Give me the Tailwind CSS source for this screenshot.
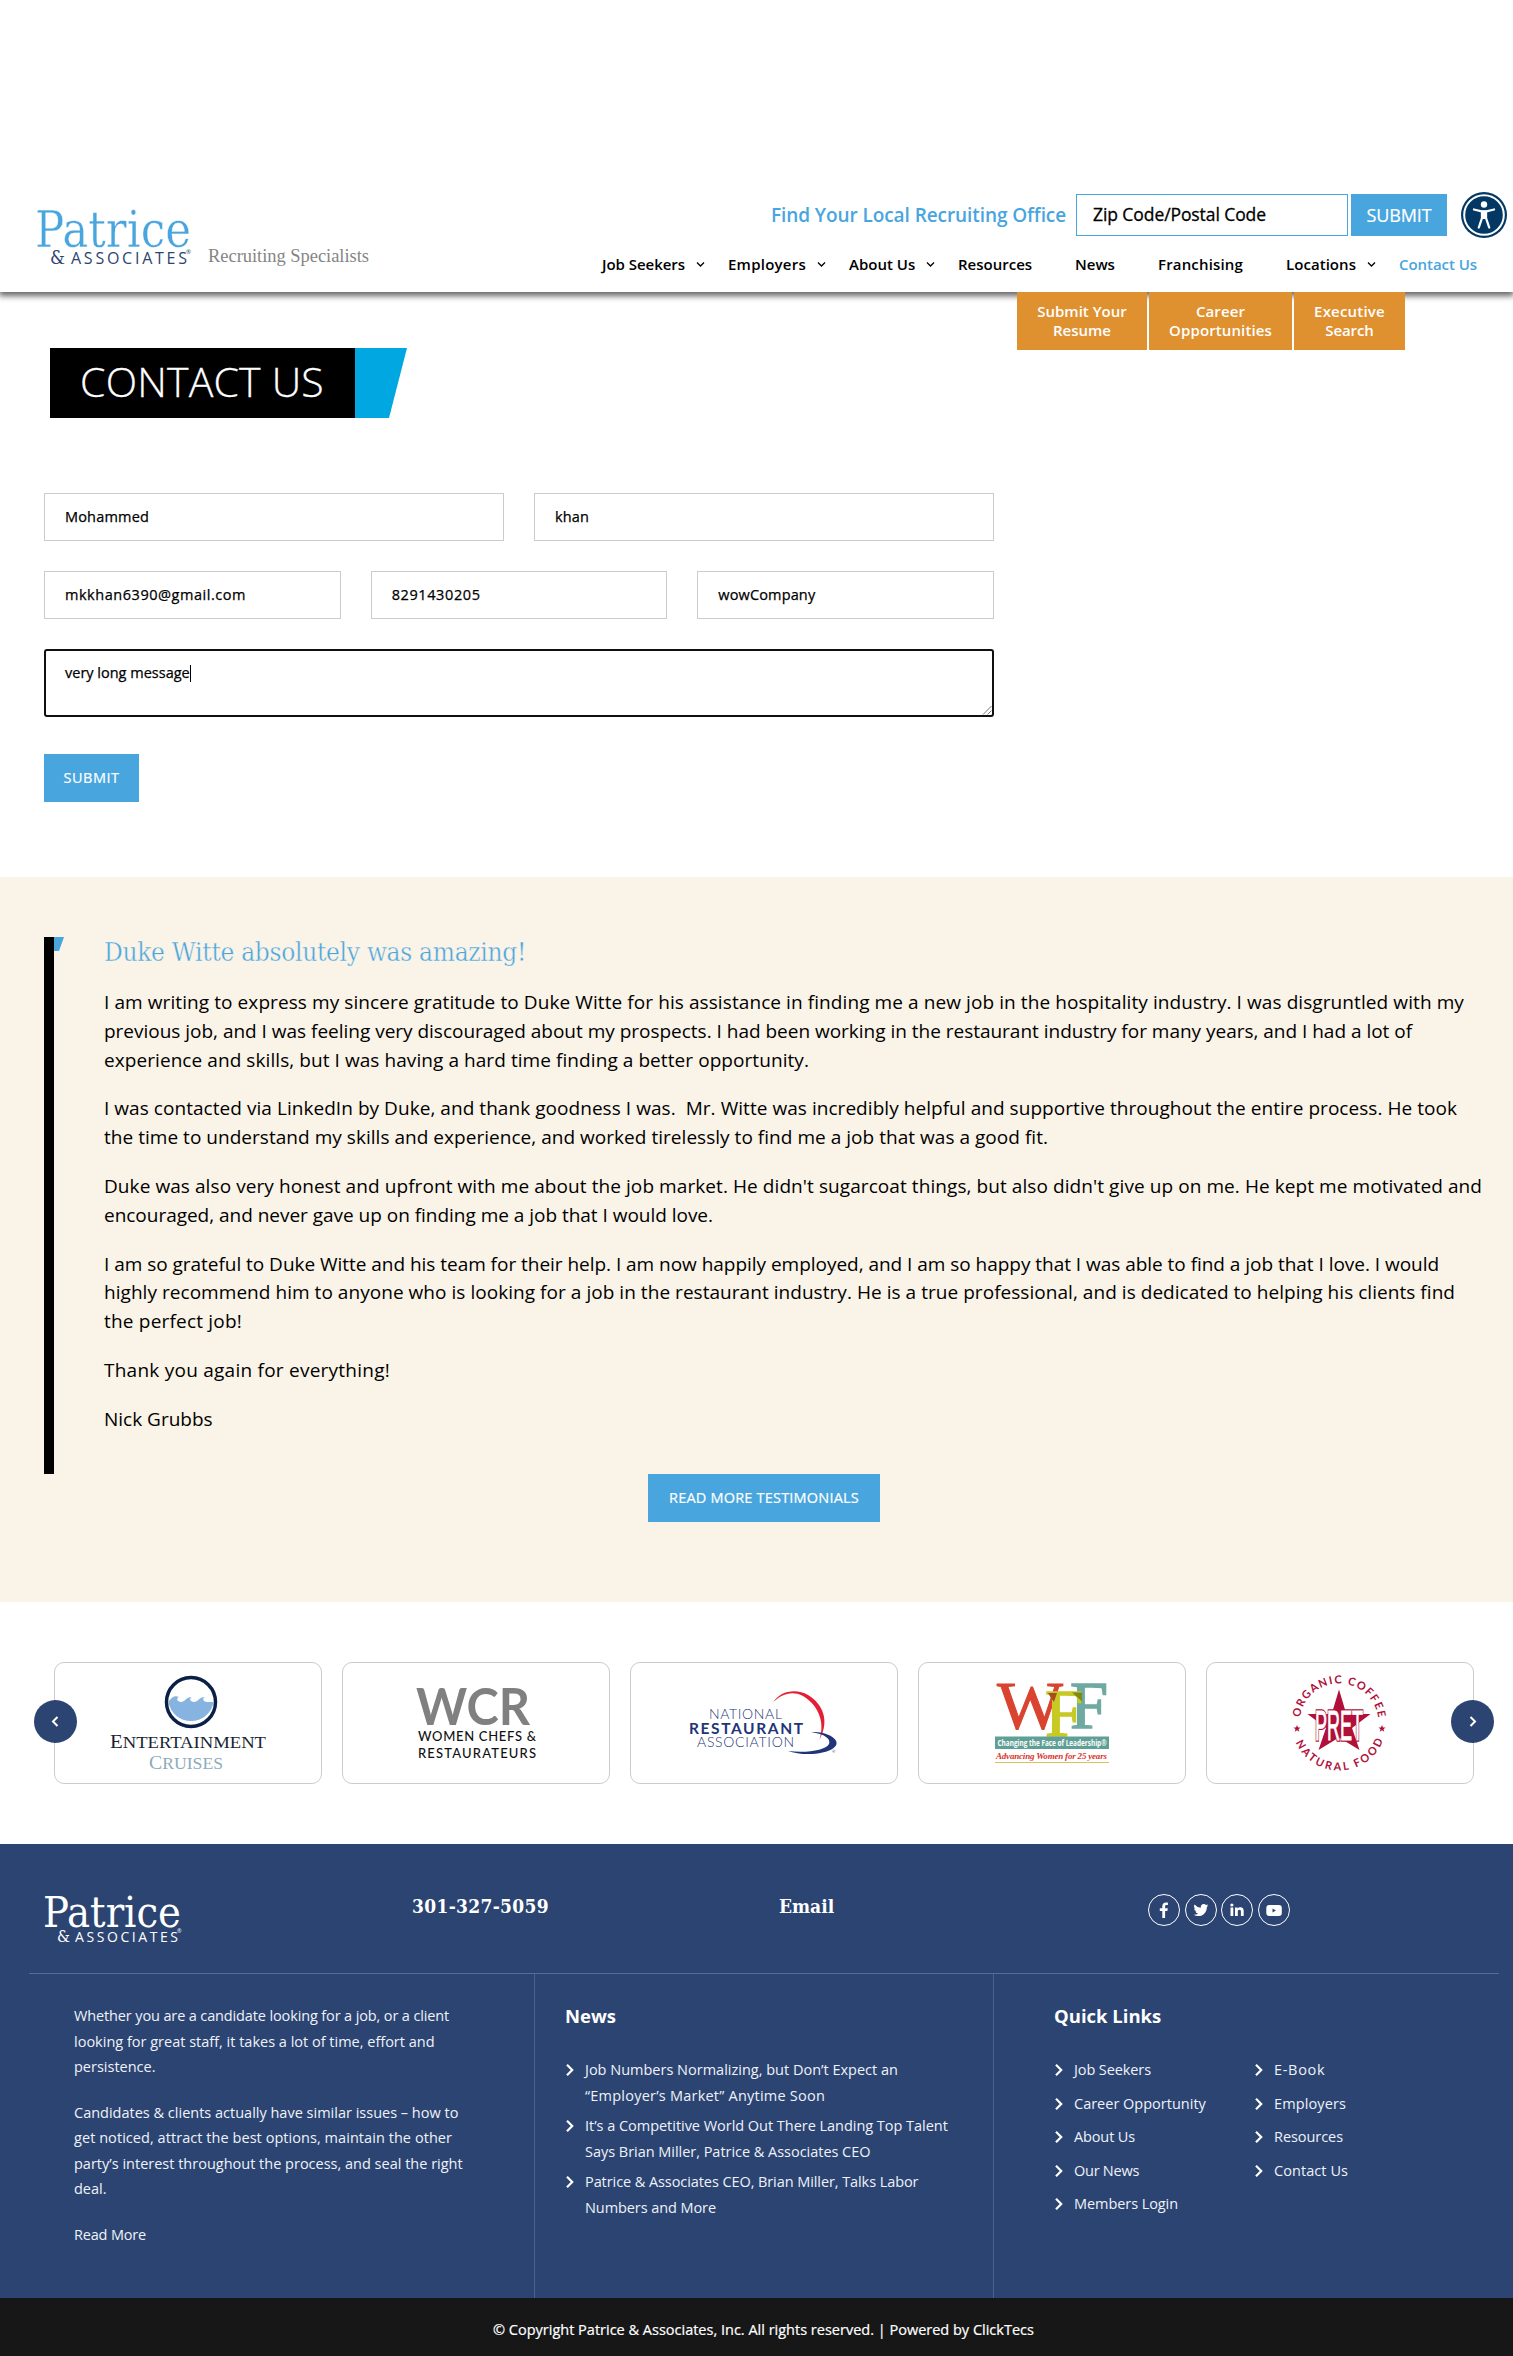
<!DOCTYPE html>
<html lang="en">
<head>
<meta charset="utf-8">
<title>Contact Us | Patrice &amp; Associates</title>
<script src="https://cdn.jsdelivr.net/npm/@tailwindcss/browser@4"></script>
</head>
<body class="bg-white font-['Open_Sans',sans-serif] text-black">
<div class="w-[1513px] overflow-hidden">

<header class="relative flex h-[292px] bg-white shadow-[0_3px_6px_1px_rgba(0,0,0,0.6)]">
  <svg class="mt-[200px] ml-[30px] h-[80px] w-[350px] shrink-0" viewBox="30 200 350 80">
    <text x="35" y="247" font-family="DejaVu Serif Condensed, DejaVu Serif, serif" font-size="50" fill="#48a5de" stroke="#fff" stroke-width="0.400" textLength="156" lengthAdjust="spacingAndGlyphs">Patrice</text>
    <text x="50" y="264" font-family="DejaVu Serif Condensed, DejaVu Serif, serif" font-size="19" fill="#2c4471" textLength="15" lengthAdjust="spacingAndGlyphs">&amp;</text>
    <text x="71" y="264" font-family="Open Sans, sans-serif" font-size="16" fill="#2c4471" textLength="116">ASSOCIATES</text>
    <text x="186" y="254" font-family="Open Sans, sans-serif" font-size="6" fill="#2c4471">®</text>
    <text x="208" y="262" font-family="Liberation Serif, serif" font-size="18.500" fill="#858585" textLength="161">Recruiting Specialists</text>
  </svg>
  <div class="mt-[194px] ml-auto w-[911px]">
    <div class="flex h-[42px] items-center justify-end pr-[6px]">
      <span class="mr-[10px] w-[295px] text-[19px] leading-[39px] font-semibold tracking-[-0.08px] whitespace-nowrap text-[#48a5de]">Find Your Local Recruiting Office</span>
      <div class="mr-[3px] h-[42px] w-[272px] border border-[#48a5de] pl-[16px] text-[17.5px] leading-[39px] tracking-[-0.08px] whitespace-nowrap [-webkit-text-stroke:0.3px_#000]">Zip Code/Postal Code</div>
      <button class="mr-[14px] h-[42px] w-[96px] bg-[#48a5de] text-[18px] leading-[42px] tracking-[-0.12px] text-white [-webkit-text-stroke:0.2px_#fff]">SUBMIT</button>
      <svg class="h-[46px] w-[46px]" viewBox="0 0 46 46"><circle cx="23" cy="23" r="23" fill="#023863"/><circle cx="23" cy="23" r="19.800" fill="none" stroke="#fff" stroke-width="2"/><circle cx="23" cy="12.500" r="3.200" fill="#fff"/><path d="M13 17.500 L20.500 19.300 H25.500 L33 17.500 M21 20 V26 L17.800 35.500 M25 20 V26 L28.200 35.500" fill="none" stroke="#fff" stroke-width="2.300" stroke-linecap="round" stroke-linejoin="round"/><path d="M20 18.500 H26 V27 H20 Z" fill="#fff"/></svg>
    </div>
    <nav class="mt-[14px] grid grid-cols-[126px_121px_109px_117px_83px_128px_113px_114px] text-[15px] leading-[28px] font-semibold whitespace-nowrap">
      <a class="flex items-center gap-[11px] tracking-[-0.04px]">Job Seekers<svg class="h-[7px] w-[9px]" viewBox="0 0 9 7"><path d="M1 1.500 4.500 5 8 1.500" fill="none" stroke="#000" stroke-width="1.300"/></svg></a>
      <a class="flex items-center gap-[11px] tracking-[0.24px]">Employers<svg class="h-[7px] w-[9px]" viewBox="0 0 9 7"><path d="M1 1.500 4.500 5 8 1.500" fill="none" stroke="#000" stroke-width="1.300"/></svg></a>
      <a class="flex items-center gap-[11px]">About Us<svg class="h-[7px] w-[9px]" viewBox="0 0 9 7"><path d="M1 1.500 4.500 5 8 1.500" fill="none" stroke="#000" stroke-width="1.300"/></svg></a>
      <a>Resources</a>
      <a>News</a>
      <a class="tracking-[0.16px]">Franchising</a>
      <a class="flex items-center gap-[11px] tracking-[0.05px]">Locations<svg class="h-[7px] w-[9px]" viewBox="0 0 9 7"><path d="M1 1.500 4.500 5 8 1.500" fill="none" stroke="#000" stroke-width="1.300"/></svg></a>
      <a class="tracking-[-0.05px] text-[#48a5de]">Contact Us</a>
    </nav>
  </div>
</header>

<main>
  <div class="relative z-10 ml-[1017px] flex h-[58px] gap-[2px] text-center text-[15px] leading-[19px] font-semibold text-white">
    <a class="w-[130px] bg-[#df912f] pt-[10px]">Submit Your<br>Resume</a>
    <a class="w-[143px] bg-[#df912f] pt-[10px] tracking-[0.12px]">Career<br>Opportunities</a>
    <a class="w-[111px] bg-[#df912f] pt-[10px]"><span class="tracking-[0.2px]">Executive</span><br><span class="tracking-[-0.1px]">Search</span></a>
  </div>

  <h1 class="-mt-[2px] ml-[50px] flex h-[70px]">
    <span class="w-[305px] bg-black pl-[30px] text-[41px] leading-[66px] font-light tracking-[0.2px] whitespace-nowrap text-white [-webkit-text-stroke:0.3px_#fff]">CONTACT US</span>
    <svg class="h-[70px] w-[52px]" viewBox="0 0 52 70"><path d="M0 0H52L34 70H0Z" fill="#00a7e1"/></svg>
  </h1>

  <form class="mt-[75px] ml-[44px] w-[950px] text-[14.5px] [-webkit-text-stroke:0.25px_#000]">
    <div class="grid grid-cols-2 gap-[30px]">
      <div class="h-[48px] border border-[#ccc] pl-[20px] leading-[46px] tracking-[0.18px]">Mohammed</div>
      <div class="h-[48px] border border-[#ccc] pl-[20px] leading-[46px] tracking-[0.13px]">khan</div>
    </div>
    <div class="mt-[30px] grid grid-cols-3 gap-[30px]">
      <div class="h-[48px] border border-[#ccc] pl-[20px] leading-[46px] tracking-[0.54px]">mkkhan6390@gmail.com</div>
      <div class="h-[48px] border border-[#ccc] pl-[20px] leading-[46px] tracking-[0.6px]">8291430205</div>
      <div class="h-[48px] border border-[#ccc] pl-[20px] leading-[46px] tracking-[0.14px]">wowCompany</div>
    </div>
    <div class="mt-[30px] flex h-[68px] rounded-[3px] border-2 border-[#101010] pt-[11px] pl-[19px]">
      <span class="h-[22px] leading-[22px]">very long message</span><i class="mt-[3px] h-[17px] w-px bg-black"></i>
      <svg class="mt-auto ml-auto h-[10px] w-[10px]" viewBox="0 0 10 10"><path d="M1 9.500 9.500 1M5.500 9.500 9.500 5.500" stroke="#777" stroke-width="1"/></svg>
    </div>
    <button class="mt-[37px] block h-[48px] w-[95px] bg-[#48a5de] leading-[48px] tracking-[0.5px] text-white [-webkit-text-stroke:0.2px_#fff]">SUBMIT</button>
  </form>

  <section class="mt-[75px] h-[725px] bg-[#faf3e7] pt-[60px] pl-[44px]">
    <div class="flex h-[537px]">
      <div class="w-[10px] bg-black"></div>
      <svg class="h-[14px] w-[10px]" viewBox="0 0 10 14"><path d="M0 0H10L5 14H0Z" fill="#48a5de"/></svg>
      <div class="ml-[40px] text-[19px] leading-[28.8px] whitespace-nowrap text-black">
        <h2 class="mb-[20px] font-['DejaVu_Serif_Condensed','DejaVu_Serif',serif] text-[26px] leading-[31px] tracking-[-0.29px] text-[#48a5de] [-webkit-text-stroke:0.4px_#faf3e7]">Duke Witte absolutely was amazing!</h2>
        <p class="mb-[20px]"><span class="tracking-[0.087px]">I am writing to express my sincere gratitude to Duke Witte for his assistance in finding me a new job in the hospitality industry. I was disgruntled with my</span><br><span class="tracking-[-0.015px]">previous job, and I was feeling very discouraged about my prospects. I had been working in the restaurant industry for many years, and I had a lot of</span><br><span class="tracking-[0.072px]">experience and skills, but I was having a hard time finding a better opportunity.</span></p>
        <p class="mb-[20px]"><span class="tracking-[0.05px]">I was contacted via LinkedIn by Duke, and thank goodness I was.&nbsp; Mr. Witte was incredibly helpful and supportive throughout the entire process. He took</span><br><span class="tracking-[0.033px]">the time to understand my skills and experience, and worked tirelessly to find me a job that was a good fit.</span></p>
        <p class="mb-[20px]"><span class="tracking-[0.077px]">Duke was also very honest and upfront with me about the job market. He didn't sugarcoat things, but also didn't give up on me. He kept me motivated and</span><br><span class="tracking-[-0.023px]">encouraged, and never gave up on finding me a job that I would love.</span></p>
        <p class="mb-[20px]"><span class="tracking-[-0.031px]">I am so grateful to Duke Witte and his team for their help. I am now happily employed, and I am so happy that I was able to find a job that I love. I would</span><br><span class="tracking-[0.044px]">highly recommend him to anyone who is looking for a job in the restaurant industry. He is a true professional, and is dedicated to helping his clients find</span><br><span class="tracking-[0.198px]">the perfect job!</span></p>
        <p class="mb-[20px] tracking-[0.244px]">Thank you again for everything!</p>
        <p>Nick Grubbs</p>
      </div>
    </div>
    <button class="ml-[604px] block h-[48px] w-[232px] bg-[#48a5de] text-[14.5px] leading-[48px] tracking-[0.2px] whitespace-nowrap text-white [-webkit-text-stroke:0.2px_#fff]">READ MORE TESTIMONIALS</button>
  </section>

  <section class="relative flex h-[242px] gap-[20px] pt-[60px] pl-[54px]">
    <div class="h-[122px] w-[268px] shrink-0 rounded-[10px] border border-[#ccc]">
      <svg class="h-[120px] w-[266px]" viewBox="55 1663 266 120">
        <circle cx="191" cy="1702" r="24.500" fill="#fff" stroke="#0b2047" stroke-width="3.500"/>
        <path d="M169 1701c3-4 6-6 10-4-3 1-2 5 2 5s5-5 11-5c-3 1-2 5 2 5s5-5 11-5c-3 1-2 5 2 5h6.500a22.800 22.800 0 0 1-45 0Z" fill="#86b3df"/>
        <g font-family="Liberation Serif, serif"><text x="110" y="1748" font-size="19" fill="#1a1f33" textLength="156" lengthAdjust="spacingAndGlyphs">E<tspan font-size="17">NTERTAINMENT</tspan></text>
        <text x="149" y="1768.500" font-size="19" fill="#8eabbb" textLength="74" lengthAdjust="spacingAndGlyphs">C<tspan font-size="17">RUISES</tspan></text></g>
      </svg>
    </div>
    <div class="h-[122px] w-[268px] shrink-0 rounded-[10px] border border-[#ccc]">
      <svg class="h-[120px] w-[266px]" viewBox="343 1663 266 120" font-family="Lato, sans-serif">
        <text x="416" y="1725" font-size="51" font-weight="700" fill="#808080" textLength="114" lengthAdjust="spacingAndGlyphs">WCR</text>
        <text x="418" y="1741" font-size="13" font-weight="500" fill="#111" textLength="118">WOMEN CHEFS &amp;</text>
        <text x="418" y="1758" font-size="13" font-weight="500" fill="#111" textLength="118">RESTAURATEURS</text>
      </svg>
    </div>
    <div class="h-[122px] w-[268px] shrink-0 rounded-[10px] border border-[#ccc]">
      <svg class="h-[120px] w-[266px]" viewBox="631 1663 266 120" font-family="Lato, sans-serif" fill="#1f3577">
        <text x="709" y="1718.500" font-size="14" font-weight="300" textLength="73">NATIONAL</text>
        <text x="689" y="1733.500" font-size="15.500" font-weight="700" textLength="114">RESTAURANT</text>
        <text x="697" y="1747" font-size="14" font-weight="300" textLength="97">ASSOCIATION</text>
        <path d="M773 1702.500C780 1691 796 1688 808 1695 823 1704 830 1721 819.500 1739.500 826 1720 816 1703 802 1695.500 792 1690.500 781 1694 773 1702.500Z" fill="#e31f35"/>
        <path d="M811 1732C826 1731.500 838 1738 836.500 1744 834 1754 804 1757 788 1751 807 1753.500 826 1750 829 1744 831 1739 825 1734 811 1732Z"/>
        <text x="832" y="1753" font-size="4">®</text>
      </svg>
    </div>
    <div class="h-[122px] w-[268px] shrink-0 rounded-[10px] border border-[#ccc]">
      <svg class="h-[120px] w-[266px]" viewBox="919 1663 266 120">
        <g font-family="Liberation Serif, serif"><text x="997" y="1728" font-size="68" stroke="#d9432f" fill="#d9432f" textLength="66" lengthAdjust="spacingAndGlyphs">W</text>
        <text x="1070" y="1728" font-size="68" stroke="#6faaa2" stroke-width="1.500" fill="#6faaa2" textLength="38" lengthAdjust="spacingAndGlyphs">F</text>
        <text x="1045" y="1736" font-size="67" stroke="#c8ca24" stroke-width="1.500" fill="#c8ca24" textLength="38" lengthAdjust="spacingAndGlyphs">F</text></g>
        <path d="M1048 1693h9l-3 9-3-4Z" fill="#a5501c"/><path d="M1072 1692.500h10v9Z" fill="#7c8a1c"/>
        <rect x="995" y="1736.500" width="114" height="12.500" fill="#5f9f96"/>
        <text x="997.500" y="1745.500" font-family="Open Sans, sans-serif" font-weight="700" font-size="8" fill="#fff" textLength="109" lengthAdjust="spacingAndGlyphs">Changing the Face of Leadership®</text>
        <text x="996" y="1758.500" font-family="Liberation Serif, serif" font-style="italic" font-weight="700" font-size="9" fill="#d9332a" textLength="111">Advancing Women for 25 years</text>
        <rect x="995" y="1762" width="114" height="1" fill="#d9c25a"/>
      </svg>
    </div>
    <div class="h-[122px] w-[268px] shrink-0 rounded-[10px] border border-[#ccc]">
      <svg class="h-[120px] w-[266px]" viewBox="1207 1663 266 120" fill="#b0103a">
        <path id="ringTop" d="M1299.500 1723a39.500 39.500 0 0 1 79 0" fill="none"/>
        <path id="ringBottom" d="M1291.500 1723a47.500 47.500 0 0 0 95 0" fill="none"/>
        <g font-family="Lato, sans-serif" font-weight="700" font-size="11">
          <text textLength="113"><textPath href="#ringTop" startOffset="5.500">ORGANIC COFFEE</textPath></text>
          <text textLength="111"><textPath href="#ringBottom" startOffset="20">NATURAL FOOD</textPath></text>
        </g>
        <path d="M1339 1689.500l7.300 24.500h24.200l-18.500 14 7.500 22-20.500-12.500-20.500 12.500 7.500-22-18.500-14h24.200Z"/>
        <path d="M1297 1725l1 2.500h2.500l-2 1.700.8 2.600-2.300-1.600-2.300 1.600.8-2.600-2-1.700h2.500Z"/>
        <path d="M1382 1725l1 2.500h2.500l-2 1.700.8 2.600-2.300-1.600-2.300 1.600.8-2.600-2-1.700h2.500Z"/>
        <g font-family="Liberation Sans Narrow, Liberation Sans, sans-serif" font-size="43"><text x="1315" y="1740" fill="#b0103a" stroke="#b0103a" stroke-width="3.600" textLength="48" lengthAdjust="spacingAndGlyphs">PRET</text>
        <text x="1315" y="1740" fill="#fff" stroke="#fff" stroke-width="1" textLength="48" lengthAdjust="spacingAndGlyphs" aria-hidden="true">PRET</text></g>
      </svg>
    </div>
    <button class="absolute top-[98px] left-[34px] h-[43px] w-[43px] rounded-full bg-[#2c4471]"><svg class="h-[43px] w-[43px]" viewBox="0 0 43 43"><path d="M23.500 17 19 21.500l4.500 4.500" fill="none" stroke="#fff" stroke-width="2"/></svg></button>
    <button class="absolute top-[98px] left-[1451px] h-[43px] w-[43px] rounded-full bg-[#2c4471]"><svg class="h-[43px] w-[43px]" viewBox="0 0 43 43"><path d="M19.500 17 24 21.500 19.500 26" fill="none" stroke="#fff" stroke-width="2"/></svg></button>
  </section>
</main>

<footer class="bg-[#2c4471] text-white">
  <div class="ml-[29px] flex h-[130px] w-[1470px] border-b border-[#566c99]">
    <svg class="mt-[40px] h-[70px] w-[160px]" viewBox="29 1884 160 70">
      <text x="43" y="1927" font-family="DejaVu Serif Condensed, DejaVu Serif, serif" font-size="43" fill="#fff" textLength="138" lengthAdjust="spacingAndGlyphs">Patrice</text>
      <text x="57" y="1942" font-family="DejaVu Serif Condensed, DejaVu Serif, serif" font-size="17" fill="#fff" textLength="13" lengthAdjust="spacingAndGlyphs">&amp;</text>
      <text x="75" y="1942" font-family="Open Sans, sans-serif" font-size="14" fill="#fff" textLength="103">ASSOCIATES</text>
      <text x="177" y="1933" font-family="Open Sans, sans-serif" font-size="5.500" fill="#fff">®</text>
    </svg>
    <div class="mt-[50px] ml-[223px] w-[367px] font-['DejaVu_Serif_Condensed','DejaVu_Serif',serif] text-[19px] leading-[25px] font-bold tracking-[0.32px]">301-327-5059</div>
    <div class="mt-[50px] w-[369px] font-['DejaVu_Serif_Condensed','DejaVu_Serif',serif] text-[19px] leading-[25px] font-bold">Email</div>
    <div class="mt-[49.5px] flex gap-[4.5px]">
      <svg class="h-[32px] w-[32px]" viewBox="0 0 32 32"><circle cx="16" cy="16" r="15.500" fill="none" stroke="#fff"/><path d="M14.300 24v-7h-2.500v-2.700h2.500v-2c0-2.600 1.400-3.900 3.700-3.900h1.900v2.500h-1.300c-1.200 0-1.500.6-1.500 1.500v1.900h2.700l-.4 2.700h-2.300v7Z" fill="#fff"/></svg>
      <svg class="h-[32px] w-[32px]" viewBox="0 0 32 32"><circle cx="16" cy="16" r="15.500" fill="none" stroke="#fff"/><g transform="translate(8.500 8.600) scale(.62)"><path d="M23.950 4.570a10 10 0 0 1-2.820.77 4.960 4.960 0 0 0 2.160-2.720 9.900 9.900 0 0 1-3.130 1.200 4.920 4.920 0 0 0-8.380 4.480A13.900 13.900 0 0 1 1.640 3.160a4.920 4.920 0 0 0 1.520 6.570 4.900 4.900 0 0 1-2.230-.62v.06a4.920 4.920 0 0 0 3.950 4.830 5 5 0 0 1-2.210.08 4.940 4.940 0 0 0 4.600 3.420A9.870 9.870 0 0 1 0 19.540a14 14 0 0 0 7.550 2.210c9.050 0 14-7.500 14-13.980 0-.21 0-.42-.02-.63a9.900 9.900 0 0 0 2.420-2.570Z" fill="#fff"/></g></svg>
      <svg class="h-[32px] w-[32px]" viewBox="0 0 32 32"><circle cx="16" cy="16" r="15.500" fill="none" stroke="#fff"/><path d="M9.500 13.500h2.800V22H9.500ZM14 13.500h2.700v1.200c.5-.9 1.500-1.400 2.700-1.400 2.300 0 3.300 1.400 3.300 3.800V22h-2.800v-4.400c0-1.200-.4-1.900-1.500-1.900s-1.600.8-1.600 2V22H14Z" fill="#fff"/><circle cx="10.900" cy="11" r="1.600" fill="#fff"/></svg>
      <svg class="h-[32px] w-[32px]" viewBox="0 0 32 32"><circle cx="16" cy="16" r="15.500" fill="none" stroke="#fff"/><rect x="8.300" y="11" width="15.500" height="11" rx="3" fill="#fff"/><path d="M14.500 14.500v4l3.500-2Z" fill="#2c4471"/></svg>
    </div>
  </div>
  <div class="flex h-[324px] text-[14.5px] whitespace-nowrap text-[#eef2fa]">
    <div class="w-[535px] border-r border-[#4a6090] pt-[29px] pl-[74px] leading-[25.5px]">
      <p class="mb-[20px]"><span class="tracking-[-0.13px]">Whether you are a candidate looking for a job, or a client</span><br>looking for great staff, it takes a lot of time, effort and<br>persistence.</p>
      <p class="mb-[20px]">Candidates &amp; clients actually have similar issues – how to<br><span class="tracking-[0.056px]">get noticed, attract the best options, maintain the other</span><br>party’s interest throughout the process, and seal the right<br>deal.</p>
      <p class="tracking-[-0.18px]">Read More</p>
    </div>
    <div class="w-[459px] border-r border-[#4a6090] pt-[30px] pl-[30px]">
      <h3 class="text-[18.5px] leading-[24px] font-bold text-white">News</h3>
      <ul class="mt-[29px] flex flex-col gap-[5px] leading-[25.5px]">
        <li class="flex gap-[10px]"><svg class="mt-[7px] h-[12px] w-[10px]" viewBox="0 0 10 12"><path d="M2 .8 7.200 6 2 11.200" fill="none" stroke="#fff" stroke-width="2.200"/></svg><div>Job Numbers Normalizing, but Don’t Expect an<br><span class="tracking-[0.225px]">“Employer’s Market” Anytime Soon</span></div></li>
        <li class="flex gap-[10px]"><svg class="mt-[7px] h-[12px] w-[10px]" viewBox="0 0 10 12"><path d="M2 .8 7.200 6 2 11.200" fill="none" stroke="#fff" stroke-width="2.200"/></svg><div class="tracking-[-0.03px]">It’s a Competitive World Out There Landing Top Talent<br>Says Brian Miller, Patrice &amp; Associates CEO</div></li>
        <li class="flex gap-[10px]"><svg class="mt-[7px] h-[12px] w-[10px]" viewBox="0 0 10 12"><path d="M2 .8 7.200 6 2 11.200" fill="none" stroke="#fff" stroke-width="2.200"/></svg><div class="tracking-[-0.08px]">Patrice &amp; Associates CEO, Brian Miller, Talks Labor<br>Numbers and More</div></li>
      </ul>
    </div>
    <div class="pt-[30px] pl-[60px]">
      <h3 class="text-[18.5px] leading-[24px] font-bold text-white">Quick Links</h3>
      <div class="mt-[29px] flex leading-[25.6px]">
        <ul class="flex w-[200px] flex-col gap-[8px]">
          <li class="flex gap-[10px] tracking-[-0.1px]"><svg class="mt-[7px] h-[12px] w-[10px]" viewBox="0 0 10 12"><path d="M2 .8 7.200 6 2 11.200" fill="none" stroke="#fff" stroke-width="2.200"/></svg>Job Seekers</li>
          <li class="flex gap-[10px]"><svg class="mt-[7px] h-[12px] w-[10px]" viewBox="0 0 10 12"><path d="M2 .8 7.200 6 2 11.200" fill="none" stroke="#fff" stroke-width="2.200"/></svg>Career Opportunity</li>
          <li class="flex gap-[10px] tracking-[-0.13px]"><svg class="mt-[7px] h-[12px] w-[10px]" viewBox="0 0 10 12"><path d="M2 .8 7.200 6 2 11.200" fill="none" stroke="#fff" stroke-width="2.200"/></svg>About Us</li>
          <li class="flex gap-[10px] tracking-[-0.25px]"><svg class="mt-[7px] h-[12px] w-[10px]" viewBox="0 0 10 12"><path d="M2 .8 7.200 6 2 11.200" fill="none" stroke="#fff" stroke-width="2.200"/></svg>Our News</li>
          <li class="flex gap-[10px] tracking-[-0.07px]"><svg class="mt-[7px] h-[12px] w-[10px]" viewBox="0 0 10 12"><path d="M2 .8 7.200 6 2 11.200" fill="none" stroke="#fff" stroke-width="2.200"/></svg>Members Login</li>
        </ul>
        <ul class="flex flex-col gap-[8px]">
          <li class="flex gap-[10px] tracking-[0.7px]"><svg class="mt-[7px] h-[12px] w-[10px]" viewBox="0 0 10 12"><path d="M2 .8 7.200 6 2 11.200" fill="none" stroke="#fff" stroke-width="2.200"/></svg>E-Book</li>
          <li class="flex gap-[10px] tracking-[0.11px]"><svg class="mt-[7px] h-[12px] w-[10px]" viewBox="0 0 10 12"><path d="M2 .8 7.200 6 2 11.200" fill="none" stroke="#fff" stroke-width="2.200"/></svg>Employers</li>
          <li class="flex gap-[10px] tracking-[-0.06px]"><svg class="mt-[7px] h-[12px] w-[10px]" viewBox="0 0 10 12"><path d="M2 .8 7.200 6 2 11.200" fill="none" stroke="#fff" stroke-width="2.200"/></svg>Resources</li>
          <li class="flex gap-[10px] tracking-[0.07px]"><svg class="mt-[7px] h-[12px] w-[10px]" viewBox="0 0 10 12"><path d="M2 .8 7.200 6 2 11.200" fill="none" stroke="#fff" stroke-width="2.200"/></svg>Contact Us</li>
        </ul>
      </div>
    </div>
  </div>
  <div class="h-[58px] bg-[#171717] pl-[493px] text-[14.5px] leading-[63px] whitespace-nowrap [-webkit-text-stroke:0.2px_#fff]">© Copyright Patrice &amp; Associates, Inc. All rights reserved. | Powered by ClickTecs</div>
</footer>
</div>
</body>
</html>
